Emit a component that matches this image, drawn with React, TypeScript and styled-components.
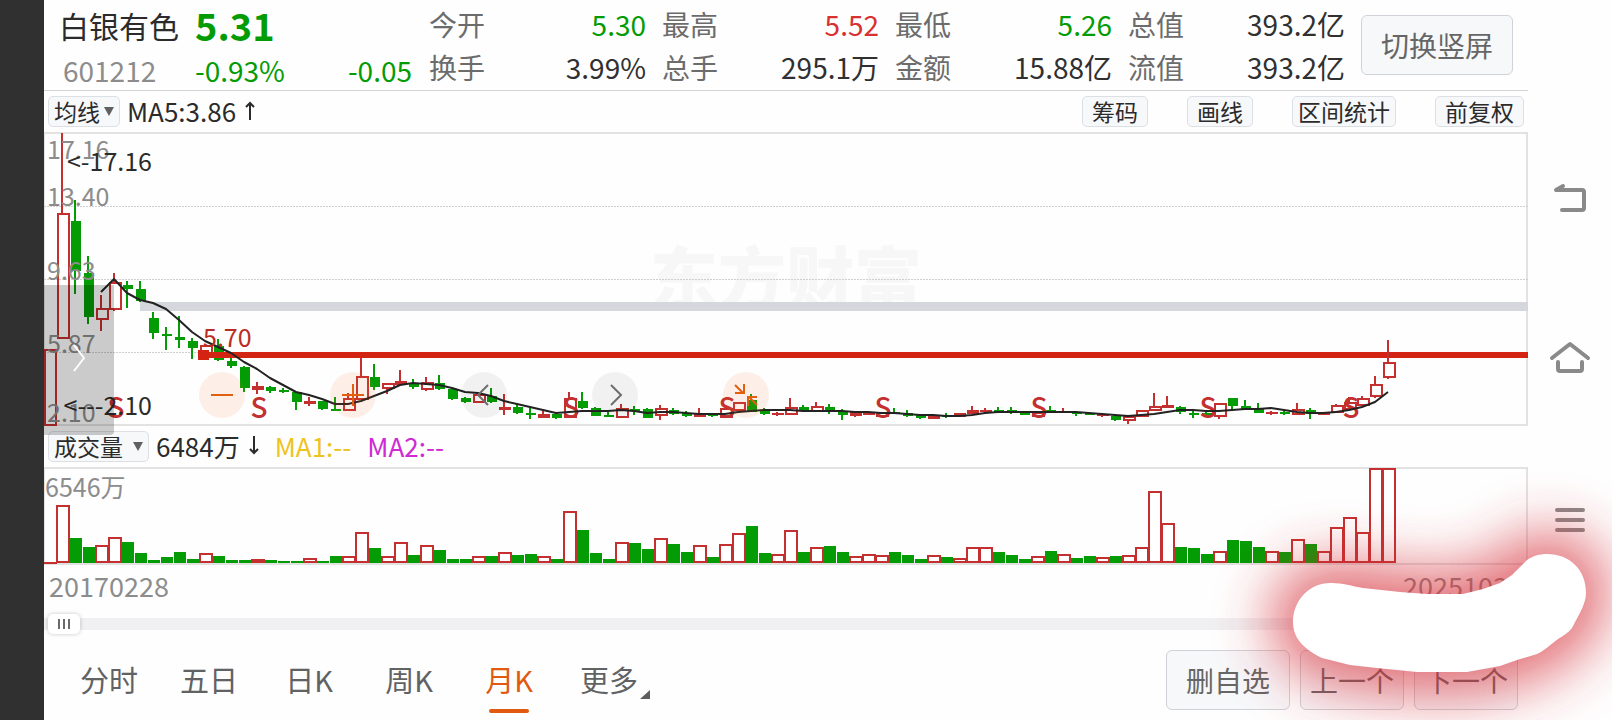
import React from 'react';
import styled, { createGlobalStyle } from 'styled-components';

const UP = '#c4302f';
const DOWN = '#049c04';
const FONT = '"Noto Sans CJK SC", "Noto Sans", sans-serif';

const GlobalStyle = createGlobalStyle`
  * { box-sizing: border-box; }
  body { margin: 0; background: #fefefe; }
  body, button, select, input { font-family: ${FONT}; font-weight: 400; }
  button, select { cursor: pointer; }
`;

/* ---------- data ---------- */

type Side = 'r' | 'g';
/* side, high, low, body top, body bottom, volume */
type Candle = [Side, number, number, number, number, number];

const candles: Candle[] = [
  ['r', 217, 294, 217, 294, 1], ['r', 1, 207, 81, 207, 58], ['g', 68, 162, 89, 139, 25], ['g', 124, 192, 141, 185, 16],
  ['r', 163, 199, 176, 188, 18], ['r', 141, 179, 150, 178, 26], ['g', 149, 176, 153, 157, 21], ['g', 149, 170, 157, 169, 10],
  ['g', 180, 207, 186, 201, 3], ['g', 195, 218, 202, 204, 6], ['g', 184, 216, 205, 208, 11], ['g', 206, 227, 209, 216, 4],
  ['r', 213, 226, 213, 226, 10], ['g', 207, 229, 214, 228, 7], ['g', 226, 236, 229, 234, 3], ['g', 234, 260, 235, 256, 3],
  ['r', 250, 262, 254, 258, 4], ['g', 254, 261, 255, 259, 3], ['g', 256, 261, 258, 260, 2], ['g', 260, 278, 260, 270, 2],
  ['r', 265, 274, 269, 272, 5], ['g', 269, 278, 269, 277, 2], ['g', 265, 279, 277, 279, 7], ['r', 261, 279, 266, 279, 7],
  ['r', 226, 268, 244, 268, 31], ['g', 232, 258, 245, 255, 15], ['r', 251, 262, 251, 257, 7], ['r', 238, 253, 249, 253, 21],
  ['g', 247, 257, 251, 255, 8], ['r', 245, 259, 250, 258, 18], ['g', 243, 258, 251, 257, 13], ['g', 256, 268, 257, 267, 4],
  ['g', 265, 271, 266, 270, 4], ['r', 261, 271, 262, 271, 7], ['g', 256, 271, 264, 270, 7], ['r', 262, 283, 275, 278, 11],
  ['g', 271, 282, 275, 281, 8], ['g', 275, 287, 281, 283, 9], ['r', 279, 286, 282, 286, 7], ['g', 281, 287, 282, 286, 4],
  ['r', 260, 286, 266, 286, 52], ['g', 260, 277, 269, 276, 33], ['g', 275, 284, 276, 284, 10], ['g', 278, 285, 283, 285, 4],
  ['r', 272, 286, 276, 286, 21], ['g', 274, 283, 277, 279, 20], ['g', 276, 286, 277, 286, 14], ['r', 273, 288, 276, 284, 25],
  ['g', 276, 283, 278, 282, 19], ['g', 279, 285, 281, 284, 11], ['r', 276, 285, 281, 285, 18], ['g', 281, 285, 282, 284, 6],
  ['r', 276, 286, 276, 286, 19], ['r', 270, 279, 270, 279, 30], ['g', 262, 280, 268, 280, 37], ['g', 276, 283, 278, 282, 10],
  ['r', 280, 284, 281, 283, 9], ['r', 266, 283, 275, 283, 33], ['g', 273, 280, 275, 279, 11], ['r', 270, 280, 274, 280, 16],
  ['g', 272, 282, 275, 279, 17], ['g', 277, 288, 279, 283, 11], ['r', 279, 285, 280, 284, 7], ['r', 280, 283, 280, 283, 9],
  ['r', 280, 285, 280, 285, 8], ['g', 276, 282, 280, 282, 11], ['g', 278, 285, 281, 284, 8], ['g', 282, 287, 283, 286, 4],
  ['r', 283, 287, 283, 287, 8], ['g', 281, 286, 283, 285, 6], ['r', 281, 285, 281, 285, 5], ['r', 274, 282, 278, 282, 16],
  ['r', 276, 282, 278, 280, 16], ['g', 275, 281, 278, 280, 11], ['g', 275, 282, 278, 281, 8], ['g', 279, 283, 281, 283, 4],
  ['r', 280, 285, 280, 285, 7], ['g', 274, 280, 278, 280, 12], ['r', 276, 281, 279, 281, 9], ['g', 280, 284, 280, 282, 5],
  ['g', 280, 283, 281, 283, 7], ['r', 281, 285, 282, 284, 6], ['g', 284, 289, 284, 288, 7], ['r', 284, 292, 284, 289, 8],
  ['r', 278, 285, 278, 285, 16], ['r', 261, 279, 274, 279, 72], ['r', 264, 276, 273, 276, 40], ['g', 274, 282, 275, 280, 16],
  ['g', 277, 286, 281, 283, 15], ['g', 280, 283, 281, 283, 9], ['r', 271, 287, 271, 285, 12], ['g', 266, 277, 266, 274, 23],
  ['g', 268, 277, 274, 277, 22], ['g', 271, 281, 276, 281, 16], ['r', 279, 283, 280, 282, 12], ['g', 279, 283, 280, 282, 11],
  ['r', 271, 283, 277, 283, 24], ['g', 276, 287, 278, 282, 19], ['r', 280, 283, 280, 283, 12], ['r', 272, 281, 273, 281, 36],
  ['r', 265, 278, 270, 278, 46], ['r', 264, 274, 266, 274, 31], ['r', 244, 266, 252, 265, 95], ['r', 208, 247, 230, 246, 95],
];

const average = [
  160, 147, 161, 168, 171, 177, 188, 200, 209, 215, 221, 230, 237, 246, 253, 260, 263, 267, 272, 272, 269, 264, 259, 253,
  251, 252, 253, 256, 260, 261, 264, 269, 272, 275, 278, 281, 280, 279, 279, 279, 278, 279, 281, 280, 280, 281, 282, 282,
  282, 280, 279, 278, 278, 278, 279, 279, 279, 279, 280, 280, 281, 281, 282, 283, 283, 284, 284, 283, 281, 280, 280, 280,
  280, 280, 280, 280, 281, 282, 283, 284, 283, 282, 280, 278, 278, 279, 279, 278, 277, 277, 276, 278, 280, 281, 281, 280,
  278, 275, 270, 260,
];

const PITCH = 13;
const centre = (i: number) => 6 + PITCH * i;
const averagePoints = average.map((y, i) => `${centre(i + 4) - 1},${y}`).join(' ');

const sellMarks = [72, 215, 527, 683, 839, 995, 1164, 1307];
const axis = [
  { y: 27, text: '17.16' },
  { y: 74, text: '13.40' },
  { y: 148, text: '9.63' },
  { y: 221, text: '5.87' },
  { y: 290, text: '2.10' },
];

const quotes: { label: string; value: string; tone?: 'up' | 'down' }[] = [
  { label: '今开', value: '5.30', tone: 'down' },
  { label: '最高', value: '5.52', tone: 'up' },
  { label: '最低', value: '5.26', tone: 'down' },
  { label: '总值', value: '393.2亿' },
  { label: '换手', value: '3.99%' },
  { label: '总手', value: '295.1万' },
  { label: '金额', value: '15.88亿' },
  { label: '流值', value: '393.2亿' },
];

/* ---------- layout ---------- */

const Screen = styled.div`
  position: relative;
  display: flex;
  min-height: 100vh;
  overflow: hidden;
  color: #2b2b2b;
`;

const Edge = styled.div`
  flex: 0 0 44px;
  background: #303030;
`;

const Main = styled.main`
  flex: 1;
  min-width: 0;
  display: flex;
  flex-direction: column;
`;

const Header = styled.header`
  display: flex;
  align-items: center;
  height: 91px;
  padding-right: 15px;
  border-bottom: 1px solid #d2d4d6;
`;

const Stock = styled.div`
  flex: 0 0 385px;
  display: grid;
  grid-template-columns: 136px 1fr auto;
  grid-template-rows: 50px 40px;
  align-items: center;
  padding: 0 17px 0 15px;
  line-height: 40px;
`;

const StockName = styled.h1`
  margin: 0;
  font-size: 30px;
  font-weight: 400;
`;

const Price = styled.strong`
  grid-column: 2 / 4;
  font-size: 38px;
  font-weight: 700;
  line-height: 50px;
  color: ${DOWN};
`;

const Code = styled.span`
  padding-left: 4px;
  font-size: 28px;
  color: #8c8c8c;
`;

const Change = styled.span`
  font-size: 28px;
  color: ${DOWN};
`;

const Quotes = styled.dl`
  flex: 1;
  display: grid;
  grid-template-columns: repeat(4, 1fr);
  column-gap: 16px;
  grid-auto-rows: 43px;
  margin: 0 16px 0 0;
`;

const Quote = styled.div<{ $tone?: 'up' | 'down' }>`
  display: flex;
  justify-content: space-between;
  align-items: center;
  font-size: 28px;
  line-height: 40px;
  white-space: nowrap;
  dt { color: #6c6c6c; }
  dd {
    margin: 0;
    color: ${p => (p.$tone === 'up' ? '#d93030' : p.$tone === 'down' ? DOWN : '#303030')};
  }
`;

const PanelButton = styled.button<{ $width: number }>`
  width: ${p => p.$width}px;
  height: 60px;
  padding: 0;
  border: 1px solid #cfd2d8;
  border-radius: 6px;
  background: #f7f8fa;
  color: #666;
  font-size: 28px;
  line-height: 40px;
`;

const Toolbar = styled.div`
  display: flex;
  align-items: center;
  height: 41px;
  padding: 0 4px;
`;

const SelectBox = styled.label<{ $width: number }>`
  position: relative;
  display: flex;
  align-items: center;
  width: ${p => p.$width}px;
  height: 31px;
  select {
    width: 100%;
    height: 100%;
    appearance: none;
    padding: 0 0 2px 5px;
    border: 1px solid #dcdfe4;
    border-radius: 5px;
    background: #f7f8fa;
    color: #2b2b2b;
    font-size: 23px;
    line-height: 28px;
  }
  svg {
    position: absolute;
    right: 6px;
    pointer-events: none;
  }
`;

const Figure = styled.span<{ $color?: string }>`
  display: flex;
  align-items: center;
  gap: 9px;
  margin-right: 16px;
  padding-bottom: 2px;
  color: ${p => p.$color || '#2b2b2b'};
  font-size: 26px;
  line-height: 30px;
  white-space: nowrap;
`;

const Figures = styled.div`
  display: flex;
  padding-left: 7px;
`;

const ToolButtons = styled.div`
  display: flex;
  gap: 39px;
  margin-left: auto;
`;

const ToolButton = styled.button<{ $tight?: boolean }>`
  height: 31px;
  padding: 0 ${p => (p.$tight ? 5 : 9)}px 2px;
  border: 1px solid #dcdfe4;
  border-radius: 5px;
  background: #f7f8fa;
  color: #2b2b2b;
  font-size: 23px;
  line-height: 28px;
`;

const Pane = styled.section<{ $height: number }>`
  position: relative;
  z-index: 1;
  height: ${p => p.$height}px;
  pointer-events: none;
  button { pointer-events: auto; }
`;

const Plot = styled.svg`
  display: block;
  width: 100%;
  height: 100%;
  text {
    font-family: ${FONT};
    font-weight: 400;
    font-size: 25px;
  }
  .watermark {
    font-size: 68px;
    font-weight: 900;
    fill: #f7f7f7;
  }
  .sell {
    font-size: 28px;
    font-weight: 500;
    fill: ${UP};
  }
`;

const Drawer = styled.button`
  position: absolute;
  left: 0;
  top: 153px;
  width: 70px;
  height: 150px;
  padding: 0;
  border: 0;
  border-radius: 0 0 4px 0;
  background: rgba(0, 0, 0, 0.2);
`;

const Controls = styled.div`
  position: absolute;
  left: 155px;
  top: 240px;
  display: flex;
  gap: 85px;
`;

const Round = styled.button<{ $grey?: boolean }>`
  display: grid;
  place-items: center;
  width: 46px;
  height: 46px;
  padding: 0;
  border: 0;
  border-radius: 50%;
  color: ${p => (p.$grey ? '#6e6e6e' : '#e0600f')};
  background: ${p => (p.$grey ? 'rgba(0, 0, 0, 0.05)' : 'rgba(250, 110, 30, 0.1)')};
`;

const Dates = styled.div`
  display: flex;
  justify-content: space-between;
  align-items: center;
  height: 44px;
  padding: 0 5px 3px 5px;
  color: #8c8c8c;
  font-size: 27px;
  line-height: 40px;
`;

const Range = styled.input`
  appearance: none;
  display: block;
  width: 100%;
  height: 30px;
  margin: 0;
  padding: 0 4px;
  background: linear-gradient(#f0f0f2, #f0f0f2) center / 100% 12px no-repeat;
  &::-webkit-slider-thumb {
    appearance: none;
    width: 32px;
    height: 20px;
    border-radius: 5px;
    box-shadow: 0 0 4px rgba(0, 0, 0, 0.22);
    background:
      linear-gradient(#6a6a6a, #6a6a6a) 10px 5px / 2px 10px no-repeat,
      linear-gradient(#6a6a6a, #6a6a6a) 15px 5px / 2px 10px no-repeat,
      linear-gradient(#6a6a6a, #6a6a6a) 20px 5px / 2px 10px no-repeat,
      #fff;
  }
`;

const Footer = styled.footer`
  display: flex;
  justify-content: space-between;
  align-items: center;
  height: 81px;
  padding: 0 10px 0 15px;
`;

const Tabs = styled.nav`
  display: flex;
`;

const Tab = styled.button<{ $active?: boolean }>`
  position: relative;
  width: 100px;
  height: 78px;
  padding: 0 0 2px;
  border: 0;
  background: none;
  color: ${p => (p.$active ? '#e05a10' : '#606264')};
  font-size: 29px;
  line-height: 40px;
  &::after {
    content: '';
    display: ${p => (p.$active ? 'block' : 'none')};
    position: absolute;
    left: 30px;
    bottom: 6px;
    width: 40px;
    height: 4px;
    border-radius: 2px;
    background: #e05a10;
  }
  svg {
    position: absolute;
    right: 9px;
    bottom: 20px;
  }
`;

const Actions = styled.div`
  display: flex;
  gap: 10px;
`;

const SystemNav = styled.nav`
  flex: 0 0 84px;
  display: flex;
  flex-direction: column;
  align-items: center;
  gap: 117px;
  padding-top: 176px;
`;

const SystemButton = styled.button`
  width: 44px;
  height: 44px;
  padding: 0;
  border: 0;
  background: none;
  color: #8a8a8a;
`;

const Smudge = styled.svg`
  position: absolute;
  z-index: 2;
  right: 0;
  top: 460px;
  width: 420px;
  height: 260px;
  overflow: visible;
  pointer-events: none;
`;

/* ---------- pieces ---------- */

const Caret = () => (
  <svg width="10" height="9" viewBox="0 0 10 9"><path d="M0 0h10L5 9z" fill="#606060" /></svg>
);

const Arrow = ({ down }: { down?: boolean }) => (
  <svg width="10" height="19" viewBox="0 0 10 19" fill="none" stroke="currentColor" strokeWidth="2">
    <path d={down ? 'M5 0v17M1 13l4 4 4-4' : 'M5 19V2M1 6l4-4 4 4'} />
  </svg>
);

const Stick = ({ candle, index }: { candle: Candle; index: number }) => {
  const [side, high, low, top, bottom] = candle;
  const x = centre(index);
  if (side === 'g') {
    return (
      <g fill={DOWN}>
        <rect x={x - 2} y={high} width="2" height={low - high} />
        <rect x={x - 5} y={top} width="10" height={bottom - top} />
      </g>
    );
  }
  const hollow = bottom - top > 4;
  return (
    <g fill={UP}>
      <rect x={x - 2} y={high} width="2" height={top - high} />
      <rect x={x - 2} y={bottom} width="2" height={Math.max(0, low - bottom)} />
      {hollow ? (
        <rect x={x - 5} y={top + 1} width="11" height={bottom - top - 2} fill="none" stroke={UP} strokeWidth="2" />
      ) : (
        <rect x={x - 6} y={top} width="12" height={bottom - top} />
      )}
    </g>
  );
};

const PaneBorder = ({ height }: { height: number }) => (
  <g fill="#e2e2e2">
    <rect width="100%" height="2" />
    <rect y={height - 2} width="100%" height="2" />
    <rect width="1" height="100%" />
    <svg x="100%" overflow="visible"><rect x="-2" width="2" height={height} /></svg>
  </g>
);

const PriceChart = () => (
  <Pane $height={294}>
    <Plot>
      <text className="watermark" x="50%" y="172" textAnchor="middle">东方财富</text>
      <PaneBorder height={294} />
      {[74, 147, 220].map(y => (
        <line key={y} x1="0" x2="100%" y1={y + 0.5} y2={y + 0.5} stroke="#cfcfcf" strokeDasharray="2 1" />
      ))}
      <rect x="96" y="170" width="100%" height="9" fill="#d4d7dc" />
      {candles.slice(0, -1).map((c, i) => <Stick key={i} candle={c} index={i} />)}
      {axis.map(a => <text key={a.text} x="3" y={a.y} fill="#8c8c8c">{a.text}</text>)}
      <rect x="154" y="220" width="100%" height="6" fill="#d32312" />
      <rect x="154" y="218" width="11" height="10" fill="#d32312" />
      <Stick candle={candles[candles.length - 1]} index={candles.length - 1} />
      {sellMarks.map(x => <text key={x} className="sell" x={x} y="286" textAnchor="middle">S</text>)}
      <polyline points={averagePoints} fill="none" stroke="#222" strokeWidth="2" strokeLinejoin="round" />
      <text x="108" y="39" fill="#2b2b2b" textAnchor="end">&lt;-17.16</text>
      <text x="108" y="283" fill="#2b2b2b" textAnchor="end">&lt;---2.10</text>
      <text x="159" y="215" fill="#bd2c22">5.70</text>
    </Plot>
    <Controls>
      <Round aria-label="缩小">
        <svg width="22" height="22" stroke="currentColor" strokeWidth="2"><path d="M0 11h22" /></svg>
      </Round>
      <Round aria-label="放大">
        <svg width="22" height="22" stroke="currentColor" strokeWidth="2"><path d="M0 11h22M11 0v22" /></svg>
      </Round>
      <Round $grey aria-label="向左">
        <svg width="22" height="22" fill="none" stroke="currentColor" strokeWidth="2"><path d="M15 1L5 11l10 10" /></svg>
      </Round>
      <Round $grey aria-label="向右">
        <svg width="22" height="22" fill="none" stroke="currentColor" strokeWidth="2"><path d="M7 1l10 10L7 21" /></svg>
      </Round>
      <Round aria-label="收起">
        <svg width="24" height="24" fill="none" stroke="currentColor" strokeWidth="2">
          <path d="M1 2l8 8M10 1v9H1M23 22l-8-8M14 23v-9h9" />
        </svg>
      </Round>
    </Controls>
    <Drawer aria-label="展开">
      <svg width="12" height="28" fill="none" stroke="#fff" strokeWidth="2"><path d="M1 1l10 13L1 27" /></svg>
    </Drawer>
  </Pane>
);

const VolumeChart = () => (
  <Pane $height={98}>
    <Plot>
      <PaneBorder height={98} />
      <text x="1" y="30" fill="#8c8c8c">6546万</text>
      {candles.map(([side, , , , , v], i) =>
        side === 'g' ? (
          <rect key={i} x={centre(i) - 6} y={96 - v} width="12" height={v} fill={DOWN} />
        ) : v < 3 ? (
          <rect key={i} x={centre(i) - 6} y={95} width="13" height="2" fill={UP} />
        ) : (
          <rect key={i} x={centre(i) - 6} y={97 - v} width="12" height={v - 2} fill="#fff" stroke={UP} strokeWidth="2" />
        ),
      )}
    </Plot>
  </Pane>
);

export default function App() {
  return (
    <Screen>
      <GlobalStyle />
      <Edge />
      <Main>
        <Header>
          <Stock>
            <StockName>白银有色</StockName>
            <Price>5.31</Price>
            <Code>601212</Code>
            <Change>-0.93%</Change>
            <Change>-0.05</Change>
          </Stock>
          <Quotes>
            {quotes.map(q => (
              <Quote key={q.label} $tone={q.tone}>
                <dt>{q.label}</dt>
                <dd>{q.value}</dd>
              </Quote>
            ))}
          </Quotes>
          <PanelButton $width={152}>切换竖屏</PanelButton>
        </Header>

        <Toolbar>
          <SelectBox $width={72}>
            <select aria-label="主图指标"><option>均线</option></select>
            <Caret />
          </SelectBox>
          <Figures>
            <Figure>MA5:3.86<Arrow /></Figure>
          </Figures>
          <ToolButtons>
            <ToolButton>筹码</ToolButton>
            <ToolButton>画线</ToolButton>
            <ToolButton $tight>区间统计</ToolButton>
            <ToolButton>前复权</ToolButton>
          </ToolButtons>
        </Toolbar>

        <PriceChart />

        <Toolbar>
          <SelectBox $width={101}>
            <select aria-label="副图指标"><option>成交量</option></select>
            <Caret />
          </SelectBox>
          <Figures>
            <Figure>6484万<Arrow down /></Figure>
            <Figure $color="#edc31f">MA1:--</Figure>
            <Figure $color="#cf2bd3">MA2:--</Figure>
          </Figures>
        </Toolbar>

        <VolumeChart />

        <Dates><span>20170228</span><span>20251031</span></Dates>
        <Range type="range" min="0" max="100" defaultValue="0" aria-label="时间范围" />

        <Footer>
          <Tabs>
            <Tab>分时</Tab>
            <Tab>五日</Tab>
            <Tab>日K</Tab>
            <Tab>周K</Tab>
            <Tab $active>月K</Tab>
            <Tab>
              更多
              <svg width="10" height="9"><path d="M10 0v9H0z" fill="#5c5e60" /></svg>
            </Tab>
          </Tabs>
          <Actions>
            <PanelButton $width={124}>删自选</PanelButton>
            <PanelButton $width={104}>上一个</PanelButton>
            <PanelButton $width={104}>下一个</PanelButton>
          </Actions>
        </Footer>
      </Main>

      <SystemNav>
        <SystemButton aria-label="返回">
          <svg width="44" height="44" fill="none" stroke="currentColor" strokeWidth="4" strokeLinecap="round" strokeLinejoin="round">
            <path d="M15 10l-7 4h26a2 2 0 0 1 2 2v16a2 2 0 0 1-2 2H14" />
          </svg>
        </SystemButton>
        <SystemButton aria-label="主页">
          <svg width="44" height="44" fill="none" stroke="currentColor" strokeWidth="4" strokeLinecap="round" strokeLinejoin="round">
            <path d="M4 21L22 7l18 14M10 25v7a2 2 0 0 0 2 2h20a2 2 0 0 0 2-2v-7" />
          </svg>
        </SystemButton>
        <SystemButton aria-label="菜单">
          <svg width="44" height="44" fill="none" stroke="currentColor" strokeWidth="4" strokeLinecap="round">
            <path d="M9 12h26M9 22h26M9 32h26" />
          </svg>
        </SystemButton>
      </SystemNav>

      <Smudge viewBox="0 0 420 260" aria-hidden="true">
        <defs>
          <filter id="glow" x="-50%" y="-100%" width="200%" height="300%">
            <feGaussianBlur stdDeviation="29" />
          </filter>
          <path
            id="stroke"
            d="M101 162C101 140 118 122 140 123C150 123 160 126 171 128L208 132L235 134H271L291 129L308 123L320 115L335 100C341 96 347 94 355 94C378 94 394 110 394 133C394 143 388 153 380 168C376 173 371 176 366 179C358 185 352 191 345 194L325 200L308 206L275 212H225L185 208L158 205L130 198C114 190 101 180 101 162Z"
          />
        </defs>
        <use href="#stroke" fill="#d62e38" stroke="#d62e38" strokeWidth="44" opacity="0.7" filter="url(#glow)" />
        <use href="#stroke" fill="#fff" />
      </Smudge>
    </Screen>
  );
}
